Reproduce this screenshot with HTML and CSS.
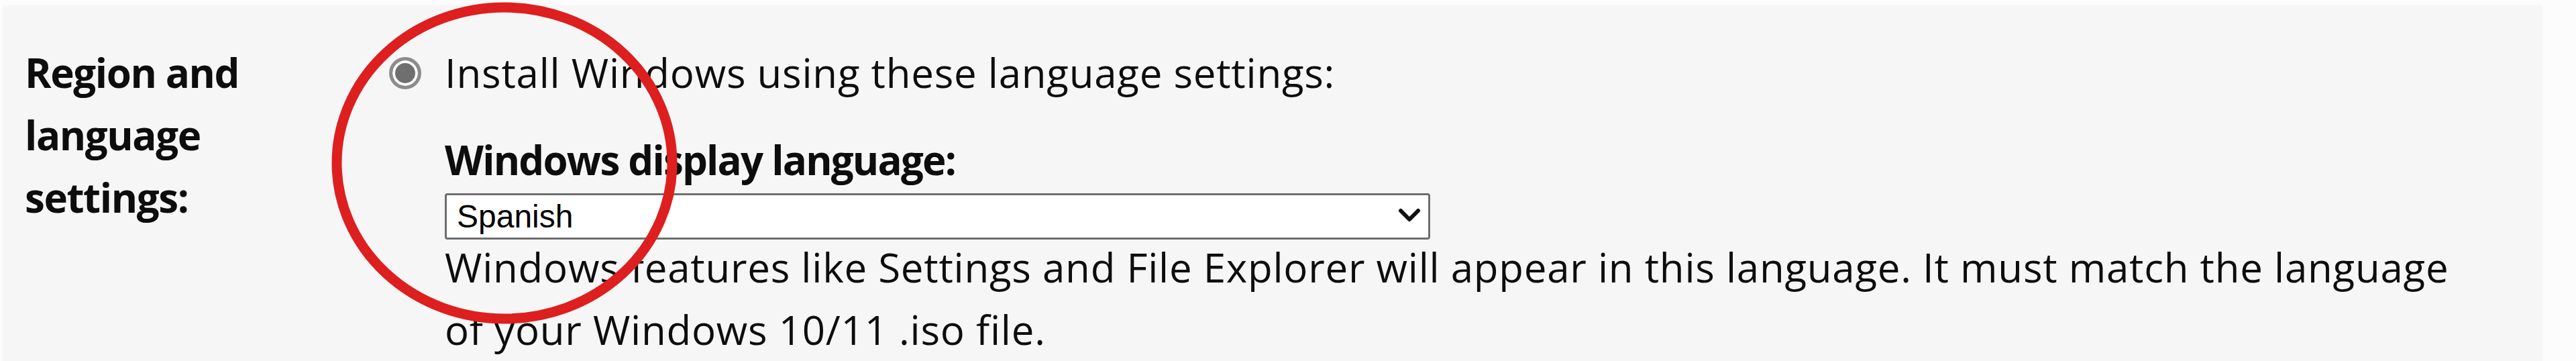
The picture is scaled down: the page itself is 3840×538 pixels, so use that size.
FILE: index.html
```html
<!DOCTYPE html>
<html lang="en">
<head>
<meta charset="utf-8">
<title>Region and language settings</title>
<link rel="stylesheet" href="styles.css">
</head>
<body>
<div class="panel">
  <div class="row">
    <div class="row-label">Region and<br>language<br>settings:</div>
    <div class="row-body">
      <label class="option">
        <input class="radio" type="radio" name="lang" checked>
        <span class="option-text">Install Windows using these language settings:</span>
      </label>
      <div class="sub">
        <div class="sub-heading">Windows display language:</div>
        <div class="select-wrap">
          <select class="select">
            <option>Spanish</option>
          </select>
          <svg class="chevron" viewBox="0 0 34 24" width="34" height="24" aria-hidden="true">
            <path d="M4 5 L17 18 L30 5" fill="none" stroke="#111" stroke-width="6" stroke-linecap="round" stroke-linejoin="round"/>
          </svg>
        </div>
        <p class="desc">Windows features like Settings and File Explorer will appear in this language. It must match the language<br>of your Windows 10/11 .iso file.</p>
      </div>
    </div>
  </div>
  <svg class="annotation" viewBox="0 0 540 500" width="540" height="500" aria-hidden="true">
    <ellipse cx="272" cy="243" rx="250" ry="232" fill="none" stroke="#dd1f1f" stroke-width="15"/>
  </svg>
</div>
</body>
</html>
```

FILE: styles.css
```css
html, body {
  margin: 0;
  padding: 0;
}
body {
  background: #fcfcfc;
  font-family: "Open Sans", "Noto Sans", sans-serif;
  color: #0d0d0d;
  overflow: hidden;
}
.panel {
  position: relative;
  margin: 8px 50px 0 4px;
  height: 530px;
  background: #f6f6f6;
  padding-top: 54px;
  box-sizing: border-box;
}
.row {
  display: grid;
  grid-template-columns: 576px 1fr;
}
.row-label {
  padding-left: 33px;
  font-weight: 700;
  font-size: 60px;
  line-height: 93px;
  letter-spacing: -1.4px;
}
.row-body {
  font-size: 60px;
  line-height: 93px;
  letter-spacing: 0.75px;
}
.option {
  display: flex;
  align-items: center;
  gap: 35px;
}
.radio {
  appearance: none;
  -webkit-appearance: none;
  margin: 0;
  width: 48px;
  height: 48px;
  border-radius: 50%;
  border: 5px solid #8c8c8c;
  background: #6f6f6f;
  box-shadow: inset 0 0 0 4px #fff;
  box-sizing: border-box;
  flex: none;
}
.sub {
  margin-left: 83px;
  margin-top: 37px;
}
.sub-heading {
  font-weight: 700;
  letter-spacing: -1.8px;
}
.select-wrap {
  position: relative;
  width: 1469px;
  margin-top: 3px;
  letter-spacing: normal;
}
.select {
  appearance: none;
  -webkit-appearance: none;
  display: block;
  width: 100%;
  height: 69px;
  margin: 0;
  padding: 0 0 0 15px;
  border: 3px solid #6e6e6e;
  border-radius: 4px;
  background: #fff;
  font-family: "Liberation Sans", Arial, sans-serif;
  font-size: 48px;
  color: #000;
  box-sizing: border-box;
}
.chevron {
  position: absolute;
  right: 14px;
  top: 21px;
  pointer-events: none;
}
.desc {
  margin: -5px 0 0;
}
.annotation {
  position: absolute;
  left: 476px;
  top: -8px;
  pointer-events: none;
}
```
